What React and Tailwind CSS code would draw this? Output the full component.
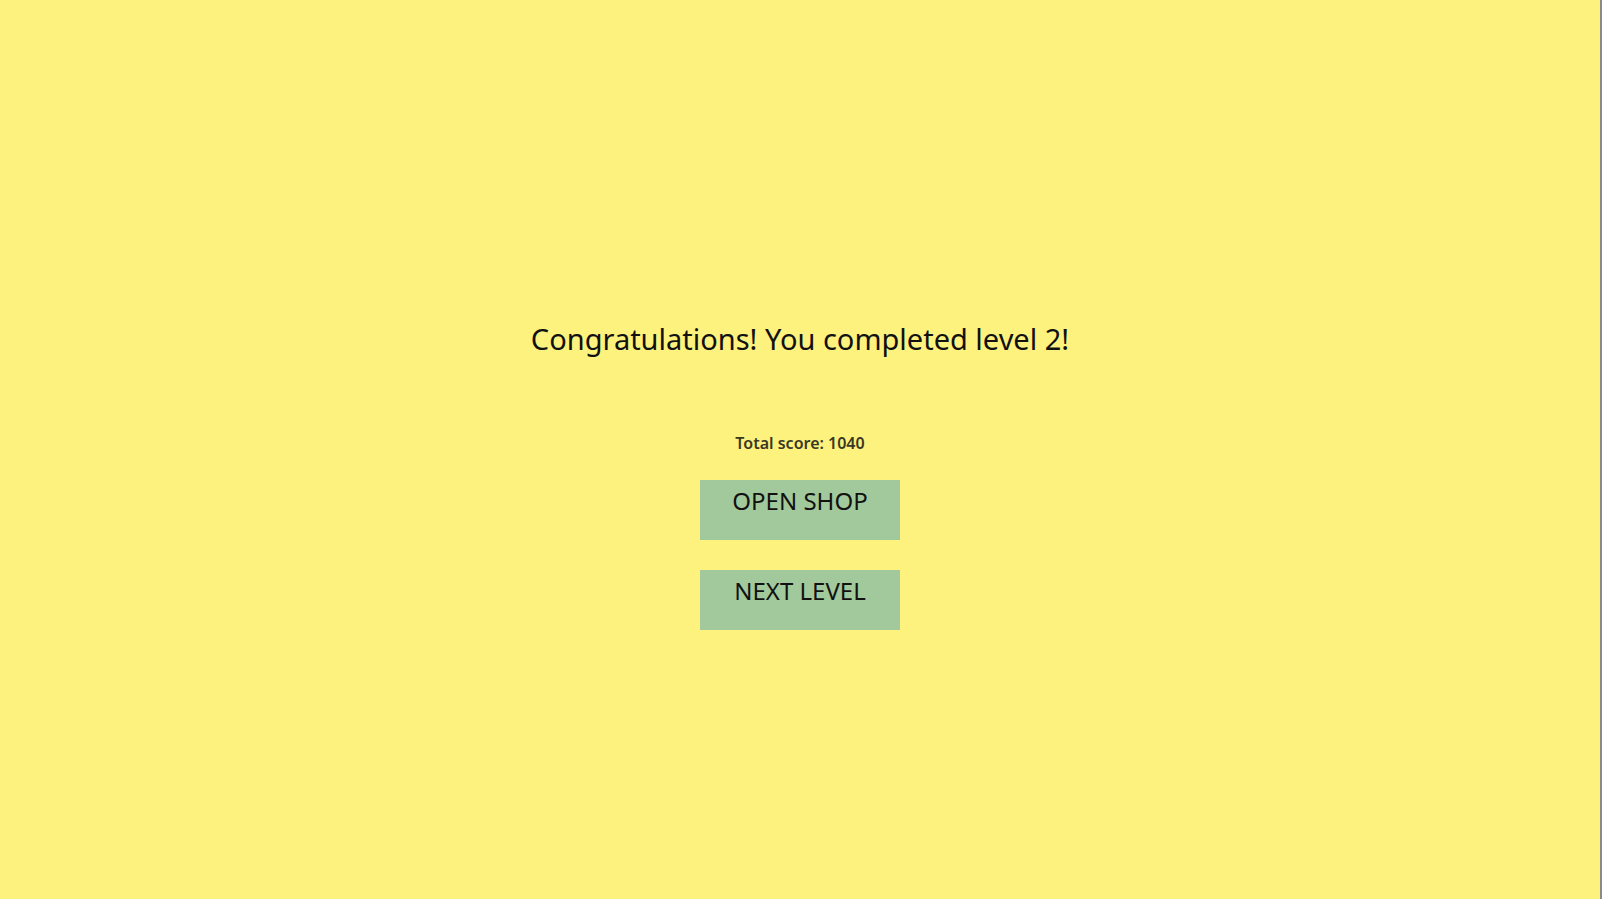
export default function App() {
  return (
    <div className="h-[899px] w-full bg-[#fef27e] border-r-2 border-[#8a8a8a] font-['Noto_Sans',sans-serif] text-[#111]">
      <div className="flex flex-col items-center pt-[324px]">
        <h1 className="text-[29px] leading-none">Congratulations! You completed level 2!</h1>
        <p className="mt-[82px] text-[16px] leading-none font-semibold text-[#3a3822]">Total score: 1040</p>
        <button className="mt-[29px] w-[200px] h-[60px] bg-[#a2c99b] pt-[9px] text-[24px] leading-none flex justify-center items-start">
          OPEN SHOP
        </button>
        <button className="mt-[30px] w-[200px] h-[60px] bg-[#a2c99b] pt-[9px] text-[24px] leading-none flex justify-center items-start">
          NEXT LEVEL
        </button>
      </div>
    </div>
  );
}
